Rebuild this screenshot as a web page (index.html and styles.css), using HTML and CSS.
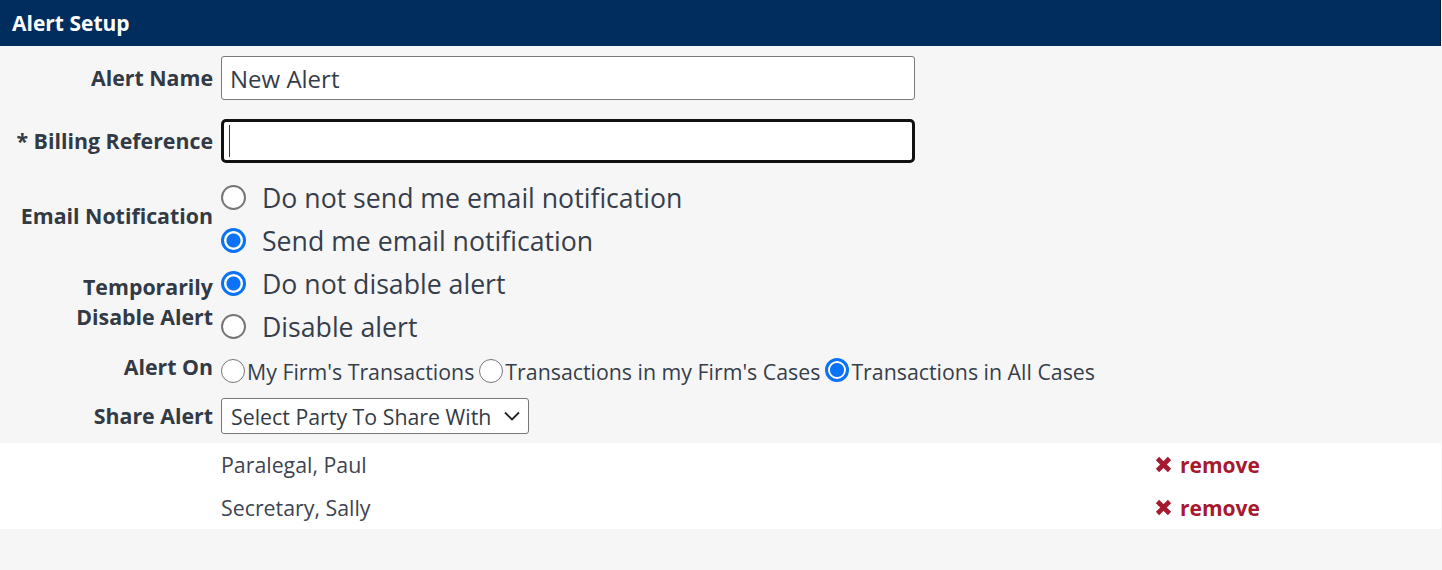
FILE: index.html
```html
<!DOCTYPE html>
<html lang="en">
<head>
<meta charset="utf-8">
<title>Alert Setup</title>
<link rel="stylesheet" href="styles.css">
</head>
<body>
<div class="panel">
  <div class="panel-header">Alert Setup</div>
  <form class="form">
    <div class="row row-name">
      <label class="label">Alert Name</label>
      <div class="field"><input class="text-input" type="text" value="New Alert"></div>
    </div>
    <div class="row row-billing">
      <label class="label">* Billing Reference</label>
      <div class="field caret-wrap"><input class="text-input focused" type="text" value=""><span class="caret"></span></div>
    </div>
    <div class="row row-email">
      <span class="label label-group">Email Notification</span>
      <div class="radio-list">
        <label class="radio-line"><input type="radio" class="radio" name="email"><span>Do not send me email notification</span></label>
        <label class="radio-line"><input type="radio" class="radio" name="email" checked><span>Send me email notification</span></label>
      </div>
    </div>
    <div class="row">
      <span class="label label-group">Temporarily Disable Alert</span>
      <div class="radio-list">
        <label class="radio-line"><input type="radio" class="radio" name="disable" checked><span>Do not disable alert</span></label>
        <label class="radio-line"><input type="radio" class="radio" name="disable"><span>Disable alert</span></label>
      </div>
    </div>
    <div class="row row-on">
      <span class="label label-group">Alert On</span>
      <div class="inline-radios">
        <label class="radio-inline"><input type="radio" class="radio radio-sm" name="on"><span>My Firm's Transactions</span></label>
        <label class="radio-inline"><input type="radio" class="radio radio-sm" name="on"><span>Transactions in my Firm's Cases</span></label>
        <label class="radio-inline"><input type="radio" class="radio radio-sm" name="on" checked><span>Transactions in All Cases</span></label>
      </div>
    </div>
    <div class="row row-share">
      <label class="label">Share Alert</label>
      <div class="field">
        <div class="select-wrap">
          <select class="select"><option>Select Party To Share With</option></select>
          <svg class="chevron" width="18" height="12" viewBox="0 0 18 12"><path d="M2 2.5 L9 9.5 L16 2.5" fill="none" stroke="#222" stroke-width="1.8"/></svg>
        </div>
      </div>
    </div>
  </form>
  <div class="shared-list">
    <div class="shared-row">
      <span class="shared-name">Paralegal, Paul</span>
      <a class="remove" href="#"><svg class="x-icon" width="17" height="17" viewBox="0 0 17 17"><path d="M2.5 2.5 L14.5 14.5 M14.5 2.5 L2.5 14.5" stroke="#a6192e" stroke-width="4.6"/></svg>remove</a>
    </div>
    <div class="shared-row">
      <span class="shared-name">Secretary, Sally</span>
      <a class="remove" href="#"><svg class="x-icon" width="17" height="17" viewBox="0 0 17 17"><path d="M2.5 2.5 L14.5 14.5 M14.5 2.5 L2.5 14.5" stroke="#a6192e" stroke-width="4.6"/></svg>remove</a>
    </div>
  </div>
</div>
</body>
</html>
```
FILE: styles.css
```css
* { box-sizing: border-box; }
html, body {
  margin: 0;
  padding: 0;
  background: #f6f6f6;
  font-family: "Open Sans", "Liberation Sans", sans-serif;
  color: #353d4a;
}
.panel {
  width: 1441px;
  min-height: 570px;
  background: #f6f6f6;
}
.panel-header {
  height: 46px;
  background: #002d5d;
  color: #ffffff;
  font-weight: 700;
  font-size: 21px;
  line-height: 46px;
  padding-left: 12px;
  border-right: 1px solid #001c3d;
}
.form {
  padding-top: 10px;
  padding-bottom: 9px;
}
.row {
  display: grid;
  grid-template-columns: 213px 1fr;
  column-gap: 8px;
  align-items: center;
}
.row-billing { margin-top: 19px; }
.row-email { margin-top: 13px; }
.row-share { margin-top: 7px; }
.label {
  text-align: right;
  font-weight: 700;
  font-size: 21.33px;
  line-height: 30px;
  color: #323a45;
}
.label-group { padding-bottom: 6px; }
.field { display: flex; }
.text-input {
  width: 694px;
  height: 44px;
  border: 1px solid #7a7a7a;
  border-radius: 3px;
  background: #fff;
  font-family: "Open Sans", "Liberation Sans", sans-serif;
  font-size: 24px;
  color: #353d4a;
  padding: 0 8px;
  outline: none;
}
.text-input.focused {
  border: 3px solid #111111;
  border-radius: 5px;
}
.caret-wrap { position: relative; }
.caret {
  position: absolute;
  left: 8px;
  top: 6px;
  width: 1px;
  height: 32px;
  background: #333;
}
.radio-list { display: flex; flex-direction: column; }
.radio-line {
  display: flex;
  align-items: center;
  height: 43px;
  font-size: 26.67px;
  color: #363e4b;
}
.radio {
  appearance: none;
  -webkit-appearance: none;
  margin: 0 16px 0 0;
  width: 25px;
  height: 25px;
  border: 2px solid #767676;
  border-radius: 50%;
  background: #fff;
  flex: none;
}
.radio:checked {
  border: 3px solid #0a72f5;
  background: radial-gradient(circle, #0a72f5 0 6.5px, #fff 7.5px);
}
.inline-radios {
  display: flex;
  align-items: center;
  height: 43px;
  padding-top: 3px;
  gap: 5px;
  font-size: 21.33px;
  color: #363e4b;
}
.radio-inline { display: flex; align-items: center; }
.radio-sm {
  width: 24px;
  height: 24px;
  margin: 0 2px 0 0;
  border-width: 1.5px;
}
.radio-sm:checked {
  margin-top: -3px;
  border-width: 3px;
  background: radial-gradient(circle, #0a72f5 0 6.5px, #fff 7.5px);
}
.select-wrap { position: relative; }
.select {
  appearance: none;
  -webkit-appearance: none;
  width: 308px;
  height: 36px;
  border: 1px solid #767676;
  border-radius: 3px;
  background: #fff;
  font-family: "Open Sans", "Liberation Sans", sans-serif;
  font-size: 21.33px;
  color: #333b46;
  padding: 0 0 0 9px;
}
.chevron {
  position: absolute;
  right: 8px;
  top: 12px;
}
.shared-list {
  background: #ffffff;
}
.shared-row {
  display: grid;
  grid-template-columns: 221px 934px auto;
  align-items: center;
  height: 43px;
}
.shared-name {
  grid-column: 2;
  font-size: 21.33px;
  color: #3d4451;
}
.remove {
  display: flex;
  align-items: center;
  gap: 8px;
  color: #a6192e;
  font-weight: 700;
  font-size: 21px;
  text-decoration: none;
}
.x-icon { flex: none; }
```
